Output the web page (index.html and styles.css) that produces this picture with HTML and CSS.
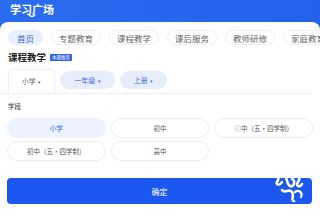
FILE: index.html
```html
<!DOCTYPE html>
<html lang="zh">
<head>
<meta charset="utf-8">
<link rel="stylesheet" href="styles.css">
</head>
<body>
<div class="page">
  <header class="header">
    <h1 class="title">学习广场</h1>
    <svg class="smile" width="8" height="4" viewBox="0 0 8 4"><path d="M1 1 Q4 4 7 1" stroke="#fff" stroke-width="1.2" fill="none" stroke-linecap="round"/></svg>
  </header>
  <main class="panel">
    <nav class="tabs">
      <span class="tab active">首页</span>
      <span class="tab">专题教育</span>
      <span class="tab">课程教学</span>
      <span class="tab">课后服务</span>
      <span class="tab">教师研修</span>
      <span class="tab">家庭教育</span>
    </nav>
    <div class="section-head">
      <h2 class="section-title">课程教学</h2>
      <span class="badge">本期推荐</span>
    </div>
    <div class="filters">
      <span class="filter current">小学 <i class="dot">▾</i></span>
      <span class="filter">一年级 <i class="dot">▾</i></span>
      <span class="filter">上册 <i class="dot">▾</i></span>
    </div>
    <div class="divider"></div>
    <div class="group-label">学段</div>
    <div class="options">
      <span class="option selected">小学</span>
      <span class="option">初中</span>
      <span class="option faded"><span class="ghost">初</span>中（五·四学制）</span>
      <span class="option">初中（五·四学制）</span>
      <span class="option">高中</span>
    </div>
    <div class="actions">
      <button class="confirm">确定</button>
      <svg class="mark" width="40" height="34" viewBox="0 0 40 34">
        <path d="M6 6 C9 3 12 9 9 12 C7 15 12 16 14 12" stroke="#fff" stroke-width="2.4" fill="none" stroke-linecap="round"/>
        <path d="M16 4 C20 8 18 14 22 16 C26 18 28 10 24 9" stroke="#fff" stroke-width="2.6" fill="none" stroke-linecap="round"/>
        <path d="M26 6 C30 4 33 8 30 12 C27 16 32 18 34 14" stroke="#fff" stroke-width="2.6" fill="none" stroke-linecap="round"/>
        <path d="M14 20 C17 24 21 18 24 22 C27 26 22 30 26 31" stroke="#fff" stroke-width="2.6" fill="none" stroke-linecap="round"/>
        <path d="M27 22 C31 19 35 23 33 27" stroke="#fff" stroke-width="2.2" fill="none" stroke-linecap="round"/>
      </svg>
    </div>
  </main>
</div>
</body>
</html>
```

FILE: styles.css
```css
* { box-sizing: border-box; margin: 0; padding: 0; }
html, body { width: 320px; height: 213px; overflow: hidden; }
body {
  font-family: "Noto Sans CJK SC", "Noto Sans", sans-serif;
  background: #fff;
  color: #333;
}
.page {
  display: flex;
  flex-direction: column;
  height: 213px;
  background: linear-gradient(90deg, #2a6cf0 0%, #2362ea 100%);
}
.header {
  position: relative;
  height: 22px;
  padding: 1px 0 0 10px;
}
.title {
  font-size: 11px;
  line-height: 16px;
  font-weight: 700;
  color: #fff;
}
.smile {
  position: absolute;
  left: 28px;
  top: 14px;
}
.panel {
  flex: 1;
  background: #fff;
  border-radius: 8px 8px 0 0;
  padding: 8px 0 0 0;
  display: flex;
  flex-direction: column;
}
.tabs {
  display: flex;
  gap: 8px;
  padding-left: 8px;
  white-space: nowrap;
  overflow: hidden;
}
.tab {
  flex: none;
  height: 15px;
  line-height: 14px;
  padding: 0 7px;
  font-size: 8.5px;
  color: #666;
  border: 0.8px solid #eceef2;
  border-radius: 8px;
  background: #fff;
}
.tab.active {
  min-width: 35px;
  text-align: center;
  background: #e9effd;
  border-color: #e9effd;
  color: #3a66d8;
}
.section-head {
  display: flex;
  align-items: center;
  gap: 4px;
  padding: 5px 0 0 8px;
  height: 19px;
}
.section-title {
  font-size: 9.5px;
  font-weight: 700;
  color: #222;
  line-height: 12px;
}
.badge {
  background: #2f62e4;
  color: #fff;
  font-size: 4.5px;
  line-height: 7px;
  padding: 0 2px;
  border-radius: 1px;
}
.filters {
  display: flex;
  align-items: center;
  gap: 5px;
  padding: 3px 0 0 8px;
  height: 28px;
}
.filter {
  width: 55px;
  height: 18px;
  line-height: 18px;
  text-align: center;
  font-size: 7px;
  color: #3e6ce6;
  background: #e8edfb;
  border-radius: 9px;
}
.filter:nth-child(3) { width: 47px; }
.filter.current {
  width: 47px;
  height: 24px;
  line-height: 22px;
  background: #fff;
  color: #666;
  border: 0.8px solid #eef0f4;
  border-bottom: none;
  border-radius: 4px 4px 0 0;
  box-shadow: 0 0 2px rgba(0,0,0,0.04);
  margin-top: 2px;
}
.dot { font-style: normal; font-size: 5px; margin-left: 1px; }
.divider {
  height: 1px;
  background: #eef0f3;
  margin: 1px 8px 0 0;
}
.group-label {
  font-size: 6.5px;
  color: #333;
  line-height: 8px;
  padding: 8px 0 0 8px;
}
.options {
  display: grid;
  grid-template-columns: repeat(3, 1fr);
  column-gap: 5px;
  row-gap: 3px;
  padding: 8px 7px 0 7px;
}
.option {
  height: 20px;
  line-height: 19px;
  text-align: center;
  font-size: 6.5px;
  color: #555;
  background: #fff;
  border: 0.8px solid #eceef2;
  border-radius: 10px;
  white-space: nowrap;
}
.option.selected {
  background: #edf2fe;
  border-color: #edf2fe;
  color: #3a68e4;
}
.ghost { color: #ccc; }
.actions {
  position: relative;
  padding: 17px 8px 0 7px;
}
.confirm {
  display: block;
  width: 100%;
  height: 26px;
  border: none;
  border-radius: 4px;
  background: #1c58f0;
  color: #fff;
  font-family: inherit;
  font-size: 8px;
}
.mark {
  position: absolute;
  right: 12px;
  top: 9px;
}
```
